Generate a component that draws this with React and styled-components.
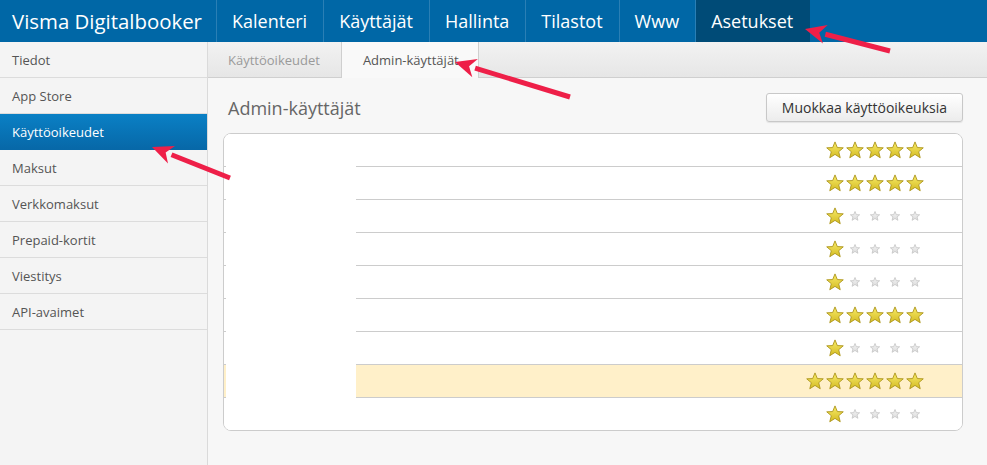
import React from 'react';
import styled, { createGlobalStyle, css } from 'styled-components';

const GlobalStyle = createGlobalStyle`
  html, body {
    margin: 0;
    padding: 0;
    height: 100%;
    background: #f7f7f7;
    font-family: "Open Sans", "Noto Sans", Arial, sans-serif;
  }
  #root {
    height: 100%;
  }
`;

const Page = styled.div`
  position: relative;
  width: 987px;
  height: 465px;
  display: flex;
  flex-direction: column;
  overflow: hidden;
`;

const TopBar = styled.div`
  height: 42px;
  flex: none;
  display: flex;
  align-items: stretch;
  background: #0067a6;
  color: #fff;
`;

const Brand = styled.div`
  width: 217px;
  flex: none;
  padding-left: 12px;
  box-sizing: border-box;
  display: flex;
  align-items: center;
  font-size: 20.4px;
  white-space: nowrap;
  overflow: hidden;
  border-right: 1px solid #2a7fb5;
`;

const NavItem = styled.div`
  display: flex;
  align-items: center;
  padding: 0 16px 0 15px;
  font-size: 18px;
  border-right: 1px solid #2a7fb5;
  ${p => p.active && css`
    background: #004b77;
    border-right-color: #004b77;
  `}
`;

const Body = styled.div`
  flex: 1;
  display: flex;
  min-height: 0;
`;

const Sidebar = styled.div`
  width: 207px;
  flex: none;
  background: #f4f4f4;
  border-right: 1px solid #dadada;
`;

const SideItem = styled.div`
  height: 35px;
  display: flex;
  align-items: center;
  padding-left: 12px;
  font-size: 13px;
  color: #555;
  border-bottom: 1px solid #dcdcdc;
  ${p => p.active && css`
    background: linear-gradient(#0a80c5, #0768a8);
    color: #fff;
    border-bottom-color: #0768a8;
  `}
`;

const Main = styled.div`
  flex: 1;
  display: flex;
  flex-direction: column;
  background: #f7f7f7;
`;

const TabBar = styled.div`
  height: 35px;
  display: flex;
  align-items: stretch;
  background: linear-gradient(#f2f2f2, #e6e6e6);
  border-bottom: 1px solid #cfcfcf;
`;

const Tab = styled.div`
  display: flex;
  align-items: center;
  padding: 0 21px 0 20px;
  font-size: 13px;
  color: #9a9a9a;
  border-right: 1px solid #cfcfcf;
  ${p => p.active && css`
    background: #f9f9f9;
    color: #555;
    padding: 0 19px 0 21px;
    margin-bottom: -1px;
  `}
`;

const Content = styled.div`
  padding: 14px 24px 0 15px;
`;

const HeadRow = styled.div`
  display: flex;
  align-items: center;
  justify-content: space-between;
  height: 31px;
  margin-bottom: 10px;
`;

const Title = styled.h2`
  margin: 0 0 0 5px;
  font-size: 18px;
  font-weight: normal;
  color: #666;
`;

const Button = styled.div`
  height: 29px;
  box-sizing: border-box;
  padding: 0 15px;
  display: flex;
  align-items: center;
  font-size: 14px;
  color: #333;
  background: linear-gradient(#ffffff, #ececec);
  border: 1px solid #c8c8c8;
  border-radius: 3px;
  box-shadow: 0 1px 1px rgba(0,0,0,0.08);
`;

const Table = styled.div`
  position: relative;
  background: #fff;
  border: 1px solid #cccccc;
  border-radius: 8px;
  overflow: hidden;
`;

const Row = styled.div`
  height: 32px;
  display: flex;
  align-items: center;
  justify-content: flex-end;
  padding-right: 37px;
  border-top: 1px solid #cccccc;
  background: ${p => (p.highlight ? '#fff0c9' : '#fff')};
  &:first-child {
    border-top: 0;
  }
`;

const Redaction = styled.div`
  position: absolute;
  top: 0;
  bottom: 0;
  left: 2px;
  width: 130px;
  background: #fff;
`;

const StarSlot = styled.span`
  width: 20px;
  height: 20px;
  display: flex;
  align-items: center;
  justify-content: center;
`;

const Star = ({ on }) => {
  const size = on ? 18 : 10;
  return (
    <StarSlot>
      <svg width={size} height={size} viewBox="0 0 20 20">
        <defs>
          <linearGradient id={on ? 'sg' : 'sgo'} x1="0" y1="0" x2="0" y2="1">
            <stop offset="0" stopColor={on ? '#f8ec6a' : '#f4f4f4'} />
            <stop offset="1" stopColor={on ? '#d4bb22' : '#dcdcdc'} />
          </linearGradient>
        </defs>
        <polygon
          points="10,1 12.6,7.3 19.2,7.6 14.1,11.9 15.8,18.6 10,14.9 4.2,18.6 5.9,11.9 0.8,7.6 7.4,7.3"
          fill={`url(#${on ? 'sg' : 'sgo'})`}
          stroke={on ? '#ad951c' : '#c4c4c4'}
          strokeWidth={on ? 1 : 1.6}
          strokeLinejoin="round"
        />
      </svg>
    </StarSlot>
  );
};

const Arrows = styled.svg`
  position: absolute;
  left: 0;
  top: 0;
  pointer-events: none;
`;

const Arrow = ({ x1, y1, x2, y2 }) => {
  const a = Math.atan2(y2 - y1, x2 - x1);
  const len = 21;
  const w = 9.5;
  const bx = x2 - len * Math.cos(a);
  const by = y2 - len * Math.sin(a);
  const px = -Math.sin(a) * w;
  const py = Math.cos(a) * w;
  return (
    <g>
      <line x1={x1} y1={y1} x2={bx} y2={by} stroke="#ee1f48" strokeWidth="5" />
      <polygon
        points={`${x2},${y2} ${bx + px},${by + py} ${bx + 0.3 * Math.cos(a) * len},${by + 0.3 * Math.sin(a) * len} ${bx - px},${by - py}`}
        fill="#ee1f48"
      />
    </g>
  );
};

const rows = [
  { n: 5 }, { n: 5 }, { n: 1 }, { n: 1 }, { n: 1 },
  { n: 5 }, { n: 1 }, { n: 6, highlight: true }, { n: 1 },
];

const nav = ['Kalenteri', 'Käyttäjät', 'Hallinta', 'Tilastot', 'Www', 'Asetukset'];
const side = ['Tiedot', 'App Store', 'Käyttöoikeudet', 'Maksut', 'Verkkomaksut', 'Prepaid-kortit', 'Viestitys', 'API-avaimet'];

export default function App() {
  return (
    <Page>
      <GlobalStyle />
      <TopBar>
        <Brand>Visma Digitalbooker</Brand>
        {nav.map(n => (
          <NavItem key={n} active={n === 'Asetukset'}>{n}</NavItem>
        ))}
      </TopBar>
      <Body>
        <Sidebar>
          {side.map(s => (
            <SideItem key={s} active={s === 'Käyttöoikeudet'}>{s}</SideItem>
          ))}
        </Sidebar>
        <Main>
          <TabBar>
            <Tab>Käyttöoikeudet</Tab>
            <Tab active>Admin-käyttäjät</Tab>
          </TabBar>
          <Content>
            <HeadRow>
              <Title>Admin-käyttäjät</Title>
              <Button>Muokkaa käyttöoikeuksia</Button>
            </HeadRow>
            <Table>
              {rows.map((r, i) => {
                const total = Math.max(5, r.n);
                return (
                  <Row key={i} highlight={r.highlight}>
                    {Array.from({ length: total }).map((_, j) => (
                      <Star key={j} on={j < r.n} />
                    ))}
                  </Row>
                );
              })}
              <Redaction />
            </Table>
          </Content>
        </Main>
      </Body>
      <Arrows width="987" height="465">
        <Arrow x1={890} y1={51} x2={805} y2={29} />
        <Arrow x1={570} y1={97} x2={455} y2={62} />
        <Arrow x1={230} y1={178} x2={152} y2={147} />
      </Arrows>
    </Page>
  );
}
